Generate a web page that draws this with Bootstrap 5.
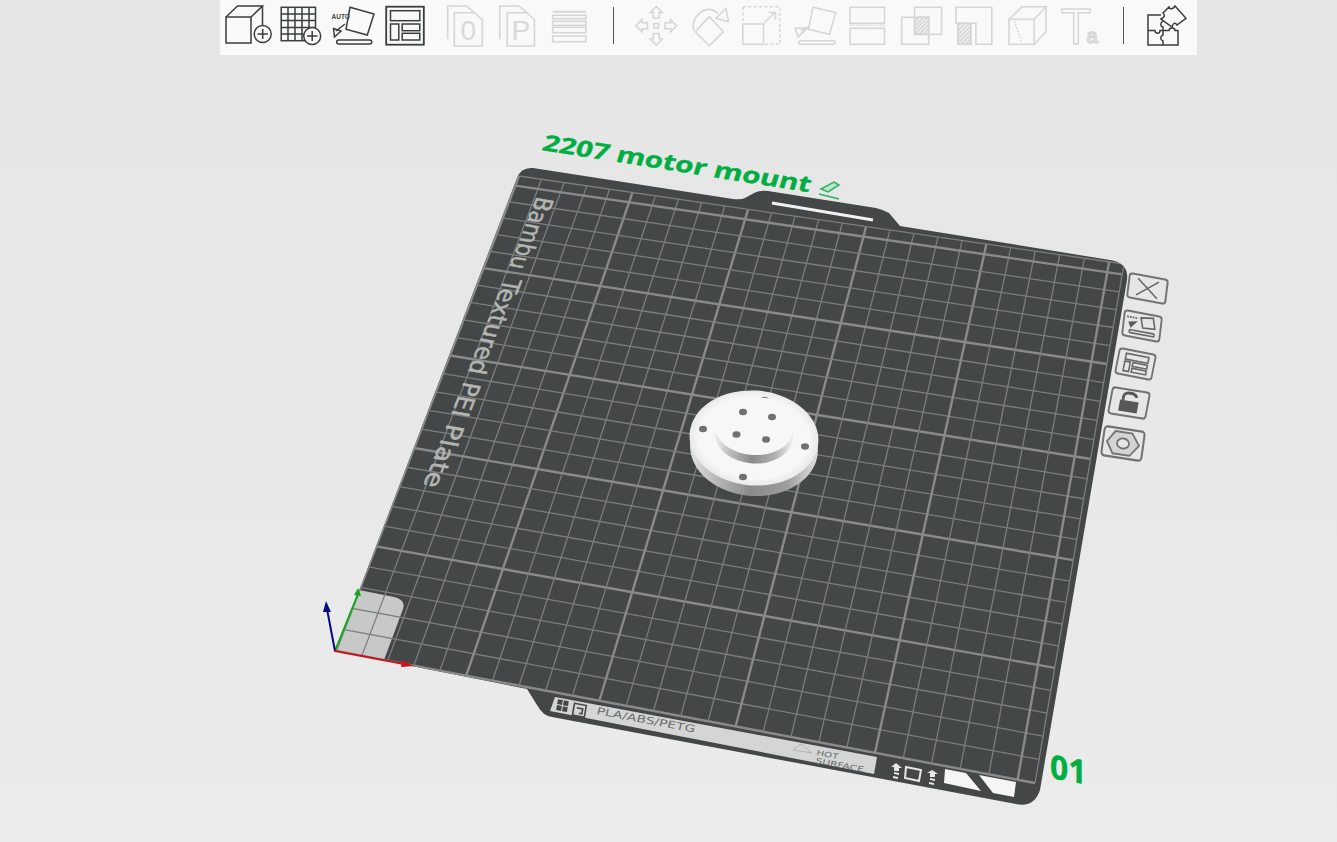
<!DOCTYPE html>
<html lang="en">

<head>
    <meta charset="UTF-8">
    <meta name="viewport" content="width=device-width, initial-scale=1.0">
    <title>Prepare - 2207 motor mount</title>
    <link href="https://cdn.jsdelivr.net/npm/bootstrap@5.3.0/dist/css/bootstrap.min.css" rel="stylesheet">
    <style>
        body {
            background-color: #e6e6e6;
            font-family: "Open Sans", "Liberation Sans", sans-serif;
        }

        .viewport-area {
            width: 1337px;
            height: 842px;
            overflow: hidden;
            background: linear-gradient(#e5e5e5, #ebebeb);
        }

        .scene-svg {
            position: absolute;
            left: 0;
            top: 0;
        }

        .tool-strip {
            position: relative;
            margin-left: 220px;
            width: 977px;
            height: 55px;
            padding-left: 2px;
            background-color: #f9f9f9;
            z-index: 2;
        }

        .tool-ico {
            width: 52.5px;
            height: 55px;
            flex: none;
            overflow: visible;
        }

        .tool-ico .on {
            fill: none;
            stroke: #3a3e3e;
            stroke-width: 1.5;
        }

        .tool-ico .off {
            fill: none;
            stroke: #d6d6d6;
            stroke-width: 1.6;
        }

        .tool-ico .hatch-fill {
            fill: url(#hatchOff);
            stroke: #d6d6d6;
        }

        .tool-sep {
            width: 1px;
            height: 37px;
            margin-top: 7px;
            background-color: #555;
            flex: none;
        }

        .gap-group { margin-left: 7px; }
        .gap-sep-a { margin-left: 16.5px; }
        .gap-after-a { margin-left: 16px; }
        .gap-sep-b { margin-left: 20.5px; }
        .gap-after-b { margin-left: 16px; }

        .ico-letter {
            font-family: "Liberation Sans", sans-serif;
            fill: #d8d8d8;
        }

        .ico-outline {
            font-family: "Liberation Sans", sans-serif;
            fill: none;
            stroke: #d6d6d6;
            stroke-width: 1.4;
        }

        .auto-tag {
            font-family: "Liberation Sans", sans-serif;
            font-weight: 700;
            font-size: 6.5px;
            fill: #444;
        }

        .plate-name {
            font-family: "Open Sans", sans-serif;
            font-weight: 700;
            fill: #00ae42;
            stroke: #00ae42;
            stroke-width: .35;
        }

        .bed-label {
            font-family: "DejaVu Sans", sans-serif;
            font-size: 25px;
            fill: #b4b6b4;
            stroke: #b4b6b4;
            stroke-width: .45;
        }

        .lip-label {
            font-family: "DejaVu Sans", sans-serif;
            fill: #6a6d6d;
        }

        .gizmo-box {
            fill: #e6e6e6;
            stroke: #717373;
            stroke-width: 2;
        }

        .gizmo-line {
            fill: none;
            stroke: #666868;
            stroke-width: 1.7;
        }

        .hole {
            fill: #6e7170;
        }
    </style>
</head>

<body>
    <div class="viewport-area position-relative">

        <div class="tool-strip d-flex align-items-start">
            <!-- add -->
            <svg class="tool-ico" viewBox="0 0 52.5 55">
                <defs>
                    <pattern id="hatchOff" width="3" height="3" patternUnits="userSpaceOnUse" patternTransform="rotate(45)">
                        <rect width="3" height="3" fill="#f1f1f1"/>
                        <rect width="1.4" height="3" fill="#d2d2d2"/>
                    </pattern>
                </defs>
                <g class="on">
                    <rect x="4" y="17" width="25" height="26"/>
                    <path d="M4 17 15.5 6H40.5L29 17M40.5 6V25"/>
                    <circle cx="40.7" cy="34" r="8.5" fill="#f9f9f9"/>
                    <path d="M35.5 34H46M40.7 29V39"/>
                </g>
            </svg>
            <!-- add plate -->
            <svg class="tool-ico" viewBox="0 0 52.5 55">
                <g class="on">
                    <rect x="6.2" y="7.3" width="34.3" height="33.4"/>
                    <path d="M13 7.3V40.7M20 7.3V40.7M27 7.3V40.7M34 7.3V40.7M6.2 14H40.5M6.2 20.5H40.5M6.2 27.5H40.5M6.2 34H40.5"/>
                    <circle cx="37.2" cy="36" r="8.5" fill="#f9f9f9"/>
                    <path d="M32 36H42.5M37.2 31V41"/>
                </g>
            </svg>
            <!-- auto orient -->
            <svg class="tool-ico" viewBox="0 0 52.5 55">
                <g class="on">
                    <path d="M23 7.3 47 14 40.3 35 19 29.3Z"/>
                    <path d="M18 24 9 31M6.5 28.5 14 31 7.500 37Z"/>
                    <rect x="9.7" y="40" width="35" height="4" rx="2"/>
                </g>
                <text class="auto-tag" x="4.500" y="18.500">AUTO</text>
            </svg>
            <!-- arrange -->
            <svg class="tool-ico" viewBox="0 0 52.5 55">
                <g class="on">
                    <rect x="6.2" y="6.7" width="37.6" height="38" stroke-width="1.8"/>
                    <rect x="10.5" y="10.7" width="29.3" height="10"/>
                    <rect x="10.5" y="24" width="8.3" height="16"/>
                    <rect x="22.2" y="24" width="17.6" height="6.7"/>
                    <rect x="22.2" y="33.3" width="17.6" height="6.7"/>
                </g>
            </svg>

            <svg class="tool-ico gap-group" viewBox="0 0 52.5 55">
                <g class="off">
                    <path d="M8.7 39.3V6H27.7L35 12.7"/>
                    <path d="M15.3 12.7H36L43.3 20V46H15.3Z" fill="#f9f9f9"/>
                </g>
                <text class="ico-letter" x="29.3" y="40" font-size="28" text-anchor="middle">0</text>
            </svg>
            <svg class="tool-ico" viewBox="0 0 52.5 55">
                <g class="off">
                    <path d="M7.8 39.3V6H26.8L35 12.7"/>
                    <path d="M15.2 12.7H35L42.5 20V46H15.2Z" fill="#f9f9f9"/>
                </g>
                <text class="ico-letter" x="28.8" y="40" font-size="28" text-anchor="middle">P</text>
            </svg>
            <svg class="tool-ico" viewBox="0 0 52.5 55">
                <g class="off">
                    <path d="M8.7 11.7H42" stroke-width="2"/>
                    <rect x="8.7" y="15.3" width="33.3" height="3.4"/>
                    <rect x="8.7" y="21.3" width="33.3" height="4"/>
                    <rect x="8.7" y="27.3" width="33.3" height="5.4"/>
                    <rect x="8.7" y="36" width="33.3" height="5.7"/>
                </g>
            </svg>

            <div class="tool-sep gap-sep-a"></div>

            <!-- move -->
            <svg class="tool-ico gap-after-a" viewBox="0 0 52.5 55">
                <g class="off">
                    <rect x="24" y="23.5" width="4.6" height="4.6"/>
                    <path d="M26.3 6.500 32.3 12.500H29.3V18H23.3V12.500H20.3Z"/>
                    <path d="M26.3 45 32.3 39H29.3V33.500H23.3V39H20.3Z"/>
                    <path d="M6 25.8 12 19.8V22.8H17.500V28.8H12V31.8Z"/>
                    <path d="M46.600 25.8 40.600 19.8V22.8H35.100V28.8H40.600V31.8Z"/>
                </g>
            </svg>
            <!-- rotate -->
            <svg class="tool-ico" viewBox="0 0 52.5 55">
                <g class="off">
                    <path d="M26.3 16.7 40.3 31.7 26.3 45.7 12.2 31.7Z"/>
                    <path d="M10.500 30C7.500 17 23 2 35 13.500"/>
                    <path d="M43 8.300 45.500 21.7 33 18.300Z"/>
                </g>
            </svg>
            <!-- scale -->
            <svg class="tool-ico" viewBox="0 0 52.5 55">
                <g class="off">
                    <rect x="7.800" y="6.700" width="37" height="37.600" stroke-dasharray="3 2.400"/>
                    <rect x="7.800" y="24" width="20.700" height="20.300" fill="#f9f9f9"/>
                    <path d="M29.500 22.500 40 12.500M33.500 12.500H40.500V20"/>
                </g>
            </svg>
            <!-- lay on face -->
            <svg class="tool-ico" viewBox="0 0 52.5 55">
                <g class="off">
                    <path d="M24.900 7.300 47.800 12.700 41.500 34.300 20.400 29.300Z"/>
                    <path d="M7.100 28.300 19.300 28 10 36.700ZM13 31C15 29 17 28 20 27"/>
                    <rect x="10.800" y="40.700" width="36.300" height="3.600" rx="1.800"/>
                </g>
            </svg>
            <!-- cut -->
            <svg class="tool-ico" viewBox="0 0 52.5 55">
                <g class="off">
                    <rect x="10.100" y="7.300" width="34.400" height="16"/>
                    <rect x="10.100" y="28.300" width="34.400" height="16"/>
                    <path d="M10.100 25.300H44.500" stroke-dasharray="1.500 1.500"/>
                </g>
            </svg>
            <!-- boolean -->
            <svg class="tool-ico" viewBox="0 0 52.5 55">
                <g class="off">
                    <rect class="hatch-fill" x="21.600" y="17.300" width="14.100" height="17"/>
                    <rect x="21.600" y="7.300" width="27" height="27"/>
                    <rect x="8.700" y="17.300" width="27" height="27"/>
                </g>
            </svg>
            <!-- support paint -->
            <svg class="tool-ico" viewBox="0 0 52.5 55">
                <g class="off">
                    <rect class="hatch-fill" x="12.800" y="23.300" width="12.900" height="21"/>
                    <path d="M10.900 7.300H46.800V44.300H30.900V23.300H10.900Z"/>
                    <path d="M12.800 23.300V44.300H25.700V23.300"/>
                </g>
            </svg>
            <!-- seam -->
            <svg class="tool-ico" viewBox="0 0 52.5 55">
                <g class="off">
                    <rect x="11" y="19.300" width="25.200" height="25"/>
                    <path d="M11 19.300 24 6.700H48L36.200 19.300M48 6.700V31.700L36.200 44.300"/>
                    <path d="M17 21C17 28 23 34 23 43" stroke-dasharray="1.500 1.800"/>
                </g>
            </svg>
            <!-- text -->
            <svg class="tool-ico" viewBox="0 0 52.5 55">
                <text class="ico-outline" x="26" y="43.500" font-size="50" text-anchor="middle">T</text>
                <text class="ico-outline" x="42" y="43" font-size="20" text-anchor="middle">a</text>
            </svg>

            <div class="tool-sep gap-sep-b"></div>

            <!-- assembly -->
            <svg class="tool-ico gap-after-b" viewBox="0 0 52.5 55">
                <g class="on">
                    <path d="M21 15H8V45H38V30"/>
                    <path d="M8 30.500H15C15 34 20 34 20 30.500H29C29 27 35 27 35 30.500H38"/>
                    <path d="M23 21C20 23 20 26 23 27V35C20 36 20 40 23 41V45"/>
                    <path d="M35 6 46 18.300 37 25C35 22 33 23 32 27L21 19C25 17 25 15 23 13L29 7C30 10 33 9 35 6Z" fill="#f9f9f9"/>
                </g>
            </svg>
        </div>

        <svg class="scene-svg" width="1337" height="842" viewBox="0 0 1337 842">
            <defs>
                <linearGradient id="rimShade" x1="0" x2="1" y1="0" y2="0">
                    <stop offset="0" stop-color="#e2e2e2"/>
                    <stop offset=".25" stop-color="#b4b4b4"/>
                    <stop offset=".5" stop-color="#8a8a8a"/>
                    <stop offset=".78" stop-color="#9e9e9e"/>
                    <stop offset="1" stop-color="#e0e0e0"/>
                </linearGradient>
                <linearGradient id="bossShade" x1="0" x2="1" y1="0" y2="0">
                    <stop offset="0" stop-color="#f0f0f0"/>
                    <stop offset=".2" stop-color="#bdbdbd"/>
                    <stop offset=".5" stop-color="#8a8a8a"/>
                    <stop offset=".8" stop-color="#b4b4b4"/>
                    <stop offset="1" stop-color="#efefef"/>
                </linearGradient>
                <radialGradient id="discTop">
                    <stop offset=".85" stop-color="#f7f7f7"/>
                    <stop offset="1" stop-color="#e9e9e9"/>
                </radialGradient>
                <clipPath id="plateClip">
                    <path id="plateShape" d="M533 168Q521 167 517 178L336 651 527 689 537 705Q543 716 552 717L1016 804Q1034 808 1040 790L1127 280Q1129 263 1110 260L900 226 889 213Q884 210 876 208L768 191Q760 190 754 193L745 198Q741 200 733 199Z"/>
                </clipPath>
            </defs>

            <!-- build plate -->
            <use href="#plateShape" fill="#434747"/>
            <path fill="#c6c9c7" d="M359 590 394 597Q406 600 403 609L384 660 336 651Z"/>
            <g id="gridLines" clip-path="url(#plateClip)"></g>
            <path d="M772 203 873 220" stroke="#f2f2f2" stroke-width="3" fill="none"/>

            <g transform="matrix(-.366 .93 -.96 -.17 537 196)">
                <text class="bed-label" x="0" textLength="77" lengthAdjust="spacingAndGlyphs">Bambu</text>
                <text class="bed-label" x="88" textLength="102" lengthAdjust="spacingAndGlyphs">Textured</text>
                <text class="bed-label" x="199" textLength="37" lengthAdjust="spacingAndGlyphs">PEI</text>
                <text class="bed-label" x="244" textLength="68" lengthAdjust="spacingAndGlyphs">Plate</text>
            </g>

            <!-- lip print -->
            <path fill="#d3d6d5" d="M555 697 877 757 874 774 550 711Z"/>
            <g transform="matrix(.983 .185 -.17 .985 557 699)">
                <path fill="#434747" d="M1 0H6V5H1ZM7 0H12V5H7ZM1 6H6V11H1ZM7 6H12V11H7Z"/>
                <path fill="none" stroke="#434747" stroke-width="1.6" d="M18 1H30V13H18ZM21 5H27V10H24"/>
            </g>
            <text class="lip-label" font-size="10" textLength="100" lengthAdjust="spacingAndGlyphs" transform="matrix(.983 .185 -.25 .97 596 714)">PLA/ABS/PETG</text>
            <path fill="none" stroke="#b0b3b2" d="M801 744 812 753 793 750Z"/>
            <text class="lip-label" font-size="7.5" textLength="22" lengthAdjust="spacingAndGlyphs" transform="matrix(.983 .185 -.25 .97 816 755)">HOT</text>
            <text class="lip-label" font-size="7.5" textLength="49" lengthAdjust="spacingAndGlyphs" transform="matrix(.983 .185 -.25 .97 815 763)">SURFACE</text>
            <path fill="#e6e8e7" d="M896 763 902 768H899V771H894V767H891ZM894 772 899 773V775L894 774ZM893 776 898 777V779L893 778Z"/>
            <path fill="none" stroke="#e6e8e7" stroke-width="2" d="M906 767 921 770 919 781 905 778Z"/>
            <path fill="#e6e8e7" d="M932 770 938 774H935V777H930V773H927ZM930 778 935 779V781L930 780ZM929 782 934 783V785L929 784Z"/>
            <path fill="#f4f5f4" d="M945 769 966 773 981 791 944 783Z"/>
            <path fill="#f4f5f4" d="M979 775 1016 782 1014 797 993 793Z"/>

            <!-- axes -->
            <g fill="none" stroke-linecap="round">
                <path d="M335 651 358 594" stroke="#10a81a" stroke-width="2"/>
                <path d="M335 651 327 609" stroke="#0a0a80" stroke-width="2"/>
                <path d="M335 651 404 664" stroke="#c8141c" stroke-width="2"/>
            </g>
            <path fill="#10a81a" d="M358 588 361 596 354 595Z"/>
            <path fill="#0a0a80" d="M326 601 331 612 323 612Z"/>
            <path fill="#c8141c" d="M414 666 402 660 401 667Z"/>

            <!-- printed part -->
            <ellipse cx="754" cy="448" rx="64" ry="48" fill="url(#rimShade)" transform="rotate(4 754 448)"/>
            <ellipse cx="754" cy="438" rx="64.500" ry="47.500" fill="url(#discTop)" transform="rotate(4 754 438)"/>
            <ellipse cx="754" cy="436" rx="39" ry="27.500" fill="url(#bossShade)" transform="rotate(4 754 436)"/>
            <ellipse cx="754" cy="428.500" rx="39" ry="26.500" fill="#f7f7f7" transform="rotate(4 754 428.500)"/>
            <ellipse class="hole" cx="703" cy="429" rx="4" ry="3.200"/>
            <ellipse class="hole" cx="743" cy="412" rx="4" ry="3.200"/>
            <ellipse class="hole" cx="772" cy="417" rx="4" ry="3.200"/>
            <ellipse class="hole" cx="736.500" cy="434.500" rx="4" ry="3.200"/>
            <ellipse class="hole" cx="766" cy="439.500" rx="4" ry="3.200"/>
            <ellipse class="hole" cx="805" cy="446.500" rx="4" ry="3.200"/>
            <ellipse class="hole" cx="743" cy="477" rx="4" ry="3.200"/>
            <path class="hole" d="M761 398Q765 395 769 399 765 397 761 398Z"/>

            <!-- plate labels -->
            <text class="plate-name" font-size="22.500" textLength="272" lengthAdjust="spacingAndGlyphs" transform="matrix(.985 .155 -.3 .96 541 150)">2207 motor mount</text>
            <g fill="none" stroke="#2bb45f" stroke-width="1.500">
                <path d="M821 189 834 182 839 185 828 192Z" fill="#bfe6cd"/>
                <path d="M819 194 839 199" stroke-width="1.800"/>
            </g>
            <text class="plate-name" font-size="33" textLength="37" lengthAdjust="spacingAndGlyphs" transform="matrix(.985 .17 0 1 1050 778)">01</text>

            <!-- gizmo buttons on the plate side -->
            <g transform="matrix(.95 .175 -.115 .923 1130 273)">
                <rect class="gizmo-box" width="40" height="26" rx="3"/>
                <path class="gizmo-line" d="M9 4 31 22M31 4 9 22" stroke-width="2.400"/>
            </g>
            <g transform="matrix(.925 .175 -.115 .96 1125 310)">
                <rect class="gizmo-box" width="40" height="26" rx="3"/>
                <path class="gizmo-line" d="M18 5 31 3 34 14 21 15Z"/>
                <path d="M5 11 15 9 8 17Z" fill="#5c5e5e"/>
                <rect class="gizmo-line" x="7" y="19" width="27" height="3" rx="1.500"/>
                <path class="gizmo-line" d="M3 6H14" stroke-dasharray="2 1" stroke-width="2.400"/>
            </g>
            <g transform="matrix(.9 .175 -.19 .96 1120 348)">
                <rect class="gizmo-box" width="40" height="26" rx="3"/>
                <rect class="gizmo-line" x="8" y="4" width="25" height="6"/>
                <rect class="gizmo-line" x="8" y="12" width="6" height="10"/>
                <rect class="gizmo-line" x="17" y="12" width="16" height="4"/>
                <rect class="gizmo-line" x="17" y="18" width="16" height="4"/>
            </g>
            <g transform="matrix(.925 .15 -.19 1 1113 387)">
                <rect class="gizmo-box" width="40" height="26" rx="3"/>
                <rect x="10" y="11" width="20" height="11" fill="#565858"/>
                <path d="M13 11V7C13 2 26 2 27 7" fill="none" stroke="#565858" stroke-width="3"/>
            </g>
            <g transform="matrix(1 .15 -.154 1.115 1105 426)">
                <rect class="gizmo-box" width="40" height="26" rx="3"/>
                <path d="M11 3H28L36 13 28 23H11L4 13Z" fill="#d2d4d3" stroke="#717373" stroke-width="1.700"/>
                <ellipse cx="20" cy="13" rx="6" ry="4.500" fill="#e6e6e6" stroke="#717373" stroke-width="1.700"/>
            </g>
        </svg>
    </div>

    <script src="https://cdn.jsdelivr.net/npm/bootstrap@5.3.0/dist/js/bootstrap.bundle.min.js"></script>
    <script>
        // bed corners on screen, used to project the mm grid
        const D = [336, 651], C = [1035, 783], B = [1124, 264], A = [519, 176];

        function solve() {
            const dx1 = C[0] - B[0], dx2 = A[0] - B[0], sx = D[0] - C[0] + B[0] - A[0];
            const dy1 = C[1] - B[1], dy2 = A[1] - B[1], sy = D[1] - C[1] + B[1] - A[1];
            const det = dx1 * dy2 - dx2 * dy1;
            const g = (sx * dy2 - dx2 * sy) / det;
            const h = (dx1 * sy - sx * dy1) / det;
            return {
                a: C[0] - D[0] + g * C[0], b: A[0] - D[0] + h * A[0], c: D[0],
                d: C[1] - D[1] + g * C[1], e: A[1] - D[1] + h * A[1], f: D[1],
                g: g, h: h
            };
        }

        const m = solve();

        function project(u, v) {
            const w = m.g * u + m.h * v + 1;
            return [(m.a * u + m.b * v + m.c) / w, (m.d * u + m.e * v + m.f) / w];
        }

        const gridLines = document.getElementById('gridLines');

        function addLine(p, q, major) {
            const el = document.createElementNS('http://www.w3.org/2000/svg', 'line');
            el.setAttribute('x1', p[0]);
            el.setAttribute('y1', p[1]);
            el.setAttribute('x2', q[0]);
            el.setAttribute('y2', q[1]);
            el.setAttribute('stroke', major ? '#888b89' : '#7b7e7c');
            el.setAttribute('stroke-width', major ? 2.4 : 1.3);
            gridLines.appendChild(el);
        }

        const size = 256;
        for (let mm = 0; mm <= size; mm += 10) {
            const t = mm / size;
            const major = mm % 50 === 0;
            addLine(project(t, 0), project(t, 1), major);
            addLine(project(0, t), project(1, t), major);
        }
        addLine(project(1, 0), project(1, 1), false);
        addLine(project(0, 1), project(1, 1), false);
    </script>

</body>

</html>
